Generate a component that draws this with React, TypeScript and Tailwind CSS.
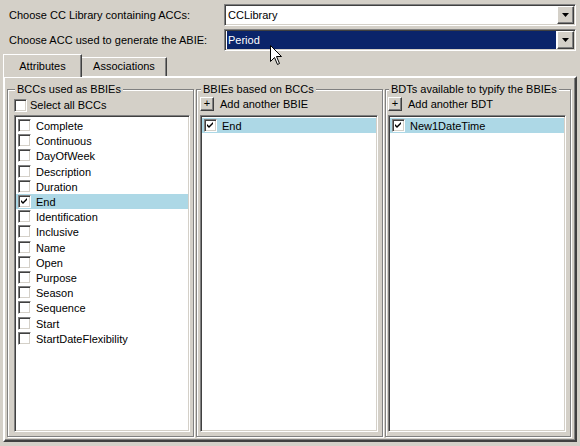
import React from "react";

const sunken =
  "border border-t-[#808080] border-l-[#808080] border-b-white border-r-white shadow-[inset_1px_1px_0_#404040,inset_-1px_-1px_0_#d4d0c8]";
const raised =
  "border border-t-white border-l-white border-b-[#404040] border-r-[#404040] shadow-[inset_-1px_-1px_0_#808080]";

function Check({ checked }: { checked?: boolean }) {
  return (
    <span className={`relative block w-[13px] h-[13px] shrink-0 bg-white ${sunken}`}>
      {checked && (
        <svg className="absolute left-[-1px] top-[-1px]" width="13" height="13" viewBox="0 0 13 13">
          <path d="M3 5 L5 7 L9 3 L9 5 L5 9 L3 7 Z" fill="#000" />
        </svg>
      )}
    </span>
  );
}

function Combo({ text, selected, width }: { text: string; selected?: boolean; width: string }) {
  return (
    <div className={`${width} h-[22px] bg-white flex p-[1px] ${sunken}`}>
      <div className="flex-1 flex items-stretch pl-[1px] pr-[1px] py-[0px]">
        <div
          className={`flex-1 flex items-center pl-[1px] ${
            selected ? "bg-[#0a246a] text-white" : "text-black"
          }`}
        >
          {text}
        </div>
      </div>
      <div className={`w-[17px] h-full bg-[#d4d0c8] flex items-center justify-center ${raised}`}>
        <svg width="7" height="4" viewBox="0 0 7 4">
          <path d="M0 0 H7 L3.5 4 Z" fill="#000" />
        </svg>
      </div>
    </div>
  );
}

type Item = { label: string; checked?: boolean; hl?: boolean };

function ListBox({ items, width }: { items: Item[]; width: string }) {
  return (
    <div className={`${width} h-[317px] bg-white px-[1px] pt-[2px] pb-[1px] ${sunken}`}>
      {items.map((it) => (
        <div
          key={it.label}
          className={`h-[15.2px] flex items-center pl-[2px] gap-[5px] ${it.hl ? "bg-[#add8e6]" : ""}`}
        >
          <Check checked={it.checked} />
          <span className="leading-none pt-[2px]">{it.label}</span>
        </div>
      ))}
    </div>
  );
}

function Group({
  title,
  titleLeft,
  padLeft,
  width,
  children,
}: {
  title: string;
  titleLeft: string;
  padLeft: string;
  width: string;
  children: React.ReactNode;
}) {
  return (
    <div
      className={`relative ${width} h-[348px] ${padLeft} border border-[#808080] shadow-[inset_1px_1px_0_#fff,1px_1px_0_#fff] flex flex-col`}
    >
      <span className={`absolute top-[-8px] ${titleLeft} px-[2px] bg-[#d4d0c8] leading-[14px]`}>{title}</span>
      {children}
    </div>
  );
}

function PlusRow({ label }: { label: string }) {
  return (
    <div className="mt-[7px] h-[14px] flex items-center gap-[6px]">
      <div className={`w-[14px] h-[14px] bg-[#d4d0c8] flex items-center justify-center leading-none ${raised}`}>
        <span className="text-[11px] leading-none mt-[-1px]">+</span>
      </div>
      <span className="pt-[1px]">{label}</span>
    </div>
  );
}

export default function App() {
  const bccs: Item[] = [
    { label: "Complete" },
    { label: "Continuous" },
    { label: "DayOfWeek" },
    { label: "Description" },
    { label: "Duration" },
    { label: "End", checked: true, hl: true },
    { label: "Identification" },
    { label: "Inclusive" },
    { label: "Name" },
    { label: "Open" },
    { label: "Purpose" },
    { label: "Season" },
    { label: "Sequence" },
    { label: "Start" },
    { label: "StartDateFlexibility" },
  ];
  return (
    <div className="relative w-[580px] h-[446px] bg-[#d4d0c8] text-black text-[11px] font-['Liberation_Sans',Arial,sans-serif] pt-[4px] overflow-hidden">
      <div className="flex items-center h-[22px]">
        <div className="w-[224px] pl-[9px] pt-[1px]">Choose CC Library containing ACCs:</div>
        <Combo text="CCLibrary" width="w-[352px]" />
      </div>
      <div className="flex items-center h-[22px] mt-[3px]">
        <div className="w-[224px] pl-[9px] pt-[1px]">Choose ACC used to generate the ABIE:</div>
        <Combo text="Period" selected width="w-[352px]" />
      </div>

      <div className="flex items-start h-[22px] mt-[3px] ml-[3px]">
        <div className="relative z-10 w-[79px] h-[23px] bg-[#d4d0c8] border-t border-l border-t-white border-l-white border-r border-r-[#404040] shadow-[inset_-1px_0_0_#808080] flex items-center justify-center pt-[1px]">
          Attributes
        </div>
        <div className="mt-[3px] w-[85px] h-[19px] border-t border-r border-t-white border-r-[#404040] shadow-[inset_-1px_0_0_#808080] flex items-center justify-center pb-[1px]">
          Associations
        </div>
      </div>

      <div className="ml-[3px] w-[574px] h-[366px] border-2 border-t-white border-l-white border-b-[#404040] border-r-[#404040] shadow-[inset_-1px_-1px_0_#808080] pt-[11px] pl-[2px] flex gap-[2px]">
        <Group title="BCCs used as BBIEs" titleLeft="left-[7px]" padLeft="pl-[6px]" width="w-[187px]">
          <div className="mt-[8px] h-[14px] flex items-center gap-[3px]">
            <Check />
            <span className="pt-[1px]">Select all BCCs</span>
          </div>
          <div className="mt-[3px]">
            <ListBox items={bccs} width="w-[176px]" />
          </div>
        </Group>
        <Group title="BBIEs based on BCCs" titleLeft="left-[4px]" padLeft="pl-[3px]" width="w-[187px]">
          <PlusRow label="Add another BBIE" />
          <div className="mt-[4px]">
            <ListBox items={[{ label: "End", checked: true, hl: true }]} width="w-[178px]" />
          </div>
        </Group>
        <Group title="BDTs available to typify the BBIEs" titleLeft="left-[3px]" padLeft="pl-[2px]" width="w-[186px]">
          <PlusRow label="Add another BDT" />
          <div className="mt-[4px]">
            <ListBox items={[{ label: "New1DateTime", checked: true, hl: true }]} width="w-[178px]" />
          </div>
        </Group>
      </div>

      <svg className="absolute left-[270px] top-[45px]" width="13" height="21" viewBox="0 0 13 21">
        <path
          d="M0.5 0.5 L0.5 16.5 L4.5 12.5 L7.5 19.5 L9.5 18.5 L6.5 11.5 L11.5 11.5 Z"
          fill="#fff"
          stroke="#000"
          strokeWidth="1"
        />
      </svg>
    </div>
  );
}
